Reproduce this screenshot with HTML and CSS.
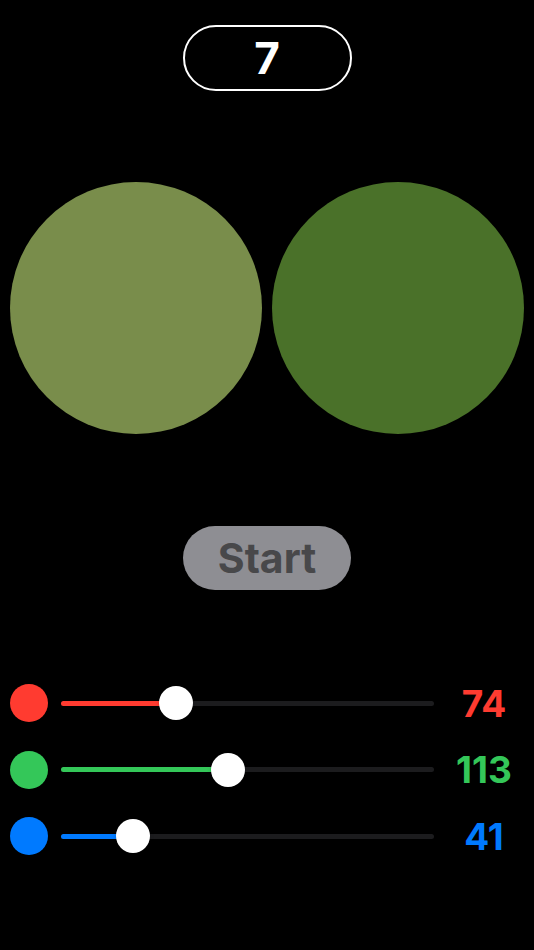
FILE: index.html
```html
<!DOCTYPE html>
<html lang="en">
<head>
    <meta charset="UTF-8">
    <meta name="viewport" content="width=device-width, initial-scale=1.0">
    <title>Color Match</title>
    <link rel="stylesheet" href="styles.css">
</head>
<body>
    <div class="app">
        <div class="round">7</div>

        <div class="circles">
            <div class="circle" style="background-color: rgb(121, 141, 75);"></div>
            <div class="circle" style="background-color: rgb(74, 113, 41);"></div>
        </div>

        <button class="start">Start</button>

        <div class="sliders">
            <div class="slider-row red">
                <div class="dot"></div>
                <div class="track">
                    <div class="fill" style="width: calc(17px + 339px * 74 / 255);"></div>
                    <div class="thumb" style="left: calc(339px * 74 / 255);"></div>
                </div>
                <div class="value">74</div>
            </div>
            <div class="slider-row green">
                <div class="dot"></div>
                <div class="track">
                    <div class="fill" style="width: calc(17px + 339px * 113 / 255);"></div>
                    <div class="thumb" style="left: calc(339px * 113 / 255);"></div>
                </div>
                <div class="value">113</div>
            </div>
            <div class="slider-row blue">
                <div class="dot"></div>
                <div class="track">
                    <div class="fill" style="width: calc(17px + 339px * 41 / 255);"></div>
                    <div class="thumb" style="left: calc(339px * 41 / 255);"></div>
                </div>
                <div class="value">41</div>
            </div>
        </div>
    </div>
</body>
</html>
```

FILE: styles.css
```css
body {
    margin: 0;
    background-color: #000;
    color: #fff;
    font-family: Inter, "Open Sans", sans-serif;
}
.app {
    display: flex;
    flex-direction: column;
    align-items: center;
    padding-top: 25px;
}
.round {
    box-sizing: border-box;
    width: 169px;
    height: 66px;
    border: 2px solid #fff;
    border-radius: 33px;
    display: flex;
    align-items: center;
    justify-content: center;
    font-size: 44px;
    font-weight: 700;
}
.circles {
    display: flex;
    gap: 10px;
    margin-top: 91px;
}
.circle {
    width: 252px;
    height: 252px;
    border-radius: 50%;
}
.start {
    margin-top: 92px;
    width: 168px;
    height: 64px;
    border: none;
    border-radius: 32px;
    background-color: #8e8e93;
    color: #48484a;
    font-family: Inter, "Open Sans", sans-serif;
    font-size: 41px;
    font-weight: 700;
    padding: 0;
}
.sliders {
    align-self: stretch;
    display: flex;
    flex-direction: column;
    gap: 28.5px;
    margin-top: 94px;
    padding-left: 10px;
}
.slider-row {
    display: flex;
    align-items: center;
    height: 38px;
}
.dot {
    width: 38px;
    height: 38px;
    border-radius: 50%;
    flex-shrink: 0;
}
.track {
    position: relative;
    width: 373px;
    height: 5px;
    margin-left: 13px;
    border-radius: 2.5px;
    background-color: #1c1c1e;
}
.fill {
    height: 5px;
    border-radius: 2.5px;
}
.thumb {
    position: absolute;
    top: -14.5px;
    width: 34px;
    height: 34px;
    border-radius: 50%;
    background-color: #fff;
    box-shadow: 0 2px 4px rgba(0, 0, 0, 0.15);
}
.value {
    width: 100px;
    text-align: center;
    font-size: 37px;
    font-weight: 700;
}
.red .dot, .red .fill { background-color: #ff3b30; }
.red .value { color: #ff3b30; }
.green .dot, .green .fill { background-color: #34c759; }
.green .value { color: #34c759; }
.blue .dot, .blue .fill { background-color: #007aff; }
.blue .value { color: #007aff; }
```
